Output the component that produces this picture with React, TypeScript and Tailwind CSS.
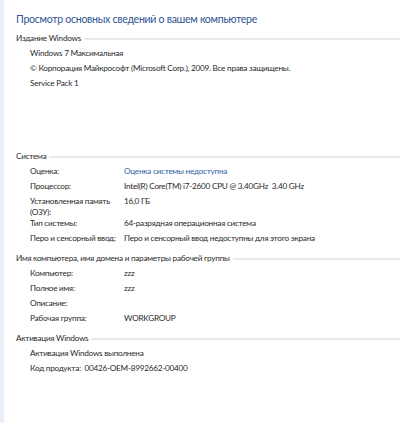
import React from "react";

const font = { fontFamily: 'Lato, "Noto Sans", sans-serif' };

function Heading({ text, className = "" }: { text: string; className?: string }) {
  return (
    <div className={`flex items-center h-[15px] pl-[16px] ${className}`}>
      <span className="text-[8.2px] leading-[15px] tracking-[-0.25px] text-[#2a2a2a] whitespace-nowrap">{text}</span>
      <div className="flex-1 ml-[3px] h-[2px] bg-[#e9e9e9]" />
    </div>
  );
}

function Line({ children }: { children: React.ReactNode }) {
  return (
    <div className="h-[15px] pl-[30px] text-[8.2px] leading-[15px] tracking-[-0.25px] text-[#2a2a2a] whitespace-pre">{children}</div>
  );
}

function Row({ label, value, link = false }: { label: string; value: string; link?: boolean }) {
  return (
    <div className="flex h-[15px] pl-[30px] text-[8.2px] leading-[15px] tracking-[-0.25px] whitespace-pre">
      <div className="w-[94px] shrink-0 text-[#2a2a2a]">{label}</div>
      <div className={link ? "text-[#2d62a8]" : "text-[#2a2a2a]"}>{value}</div>
    </div>
  );
}

export default function App() {
  return (
    <div className="flex w-[400px] h-[423px] bg-white overflow-hidden" style={font}>
      <div className="w-[4px] bg-[#eaf0f7] shrink-0" />
      <div className="flex-1 flex flex-col -ml-[4px]">
        <div className="mt-[11px] h-[16px] pl-[16px] text-[10.6px] leading-[16px] tracking-[-0.3px] text-[#2f5492] whitespace-nowrap">
          Просмотр основных сведений о вашем компьютере
        </div>
        <Heading text="Издание Windows" className="mt-[4px]" />
        <Line>Windows 7 Максимальная</Line>
        <Line>© Корпорация Майкрософт (Microsoft Corp.), 2009. Все права защищены.</Line>
        <Line>Service Pack 1</Line>

        <Heading text="Система" className="mt-[58px]" />
        <Row label="Оценка:" value="Оценка системы недоступна" link />
        <Row label="Процессор:" value="Intel(R) Core(TM) i7-2600 CPU @ 3.40GHz  3.40 GHz" />
        <div className="flex h-[22px] pt-[2px] pl-[30px] text-[8.2px] leading-[11px] tracking-[-0.25px] text-[#2a2a2a] whitespace-nowrap">
          <div className="w-[94px] shrink-0">
            Установленная память
            <br />
            (ОЗУ):
          </div>
          <div>16,0 ГБ</div>
        </div>
        <Row label="Тип системы:" value="64-разрядная операционная система" />
        <Row label="Перо и сенсорный ввод:" value="Перо и сенсорный ввод недоступны для этого экрана" />

        <Heading text="Имя компьютера, имя домена и параметры рабочей группы" className="mt-[5px]" />
        <Row label="Компьютер:" value="zzz" />
        <Row label="Полное имя:" value="zzz" />
        <Row label="Описание:" value="" />
        <Row label="Рабочая группа:" value="WORKGROUP" />

        <Heading text="Активация Windows" className="mt-[5px]" />
        <Line>Активация Windows выполнена</Line>
        <Line>{"Код продукта:  00426-OEM-8992662-00400"}</Line>
      </div>
    </div>
  );
}
